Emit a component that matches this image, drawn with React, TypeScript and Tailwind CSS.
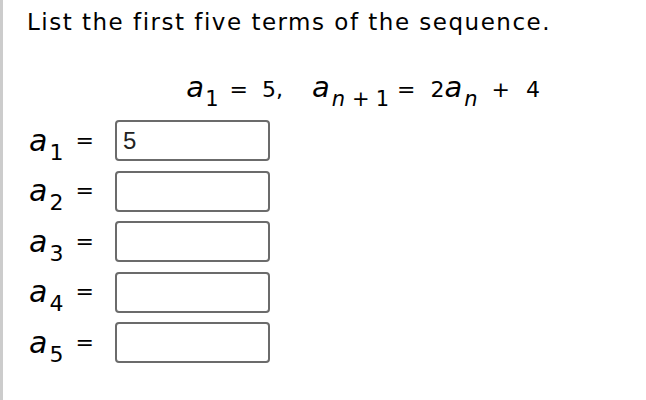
const font = { fontFamily: '"DejaVu Sans", Verdana, sans-serif' };

function Label({ n }: { n: number }) {
  return (
    <div className="w-[88px] shrink-0 flex items-baseline pl-[2px] text-black">
      <span className="italic text-[30px] leading-none">a</span>
      <span className="text-[22px] leading-none ml-[2px] relative top-[9px]">{n}</span>
      <span className="text-[22px] leading-none ml-auto mr-[21px] relative top-[-3px]">=</span>
    </div>
  );
}

export default function App() {
  const values = ["5", "", "", "", ""];
  return (
    <div className="min-h-screen w-full bg-white border-l-[3px] border-[#cccccc] pl-[24px] pt-[7px]" style={font}>
      <p className="text-[23px] leading-[30px] tracking-[1.5px] text-black">List the first five terms of the sequence.</p>

      {/* recurrence */}
      <div className="flex justify-end items-baseline h-[30px] pr-[106px] mt-[36px] text-[22px] leading-none text-black whitespace-pre">
        <span className="italic text-[29px]">a</span>
        <span className="text-[21px] relative top-[9px] ml-[1px]">1</span>
        <span className="ml-[11px]">=</span>
        <span className="ml-[14px]">5,</span>
        <span className="italic text-[29px] ml-[29px]">a</span>
        <span className="text-[21px] relative top-[9px] ml-[2px] italic">n</span>
        <span className="text-[21px] relative top-[9px] ml-[7px]">+</span>
        <span className="text-[21px] relative top-[9px] ml-[6px]">1</span>
        <span className="ml-[8px]">=</span>
        <span className="ml-[15px]">2</span>
        <span className="italic text-[29px]">a</span>
        <span className="text-[21px] relative top-[9px] ml-[2px] italic">n</span>
        <span className="ml-[14px]">+</span>
        <span className="ml-[16px]">4</span>
      </div>

      <div className="flex flex-col gap-[9.5px] mt-[17px]">
        {values.map((v, i) => (
          <div key={i} className="flex items-center h-[41px]">
            <Label n={i + 1} />
            <input
              readOnly
              value={v}
              className="w-[155px] h-[41px] border-2 border-[#6b6b6b] rounded-[4px] px-[6px] text-[24px] text-[#222] outline-none"
              style={{ fontFamily: '"Liberation Sans", Arial, sans-serif' }}
            />
          </div>
        ))}
      </div>
    </div>
  );
}
